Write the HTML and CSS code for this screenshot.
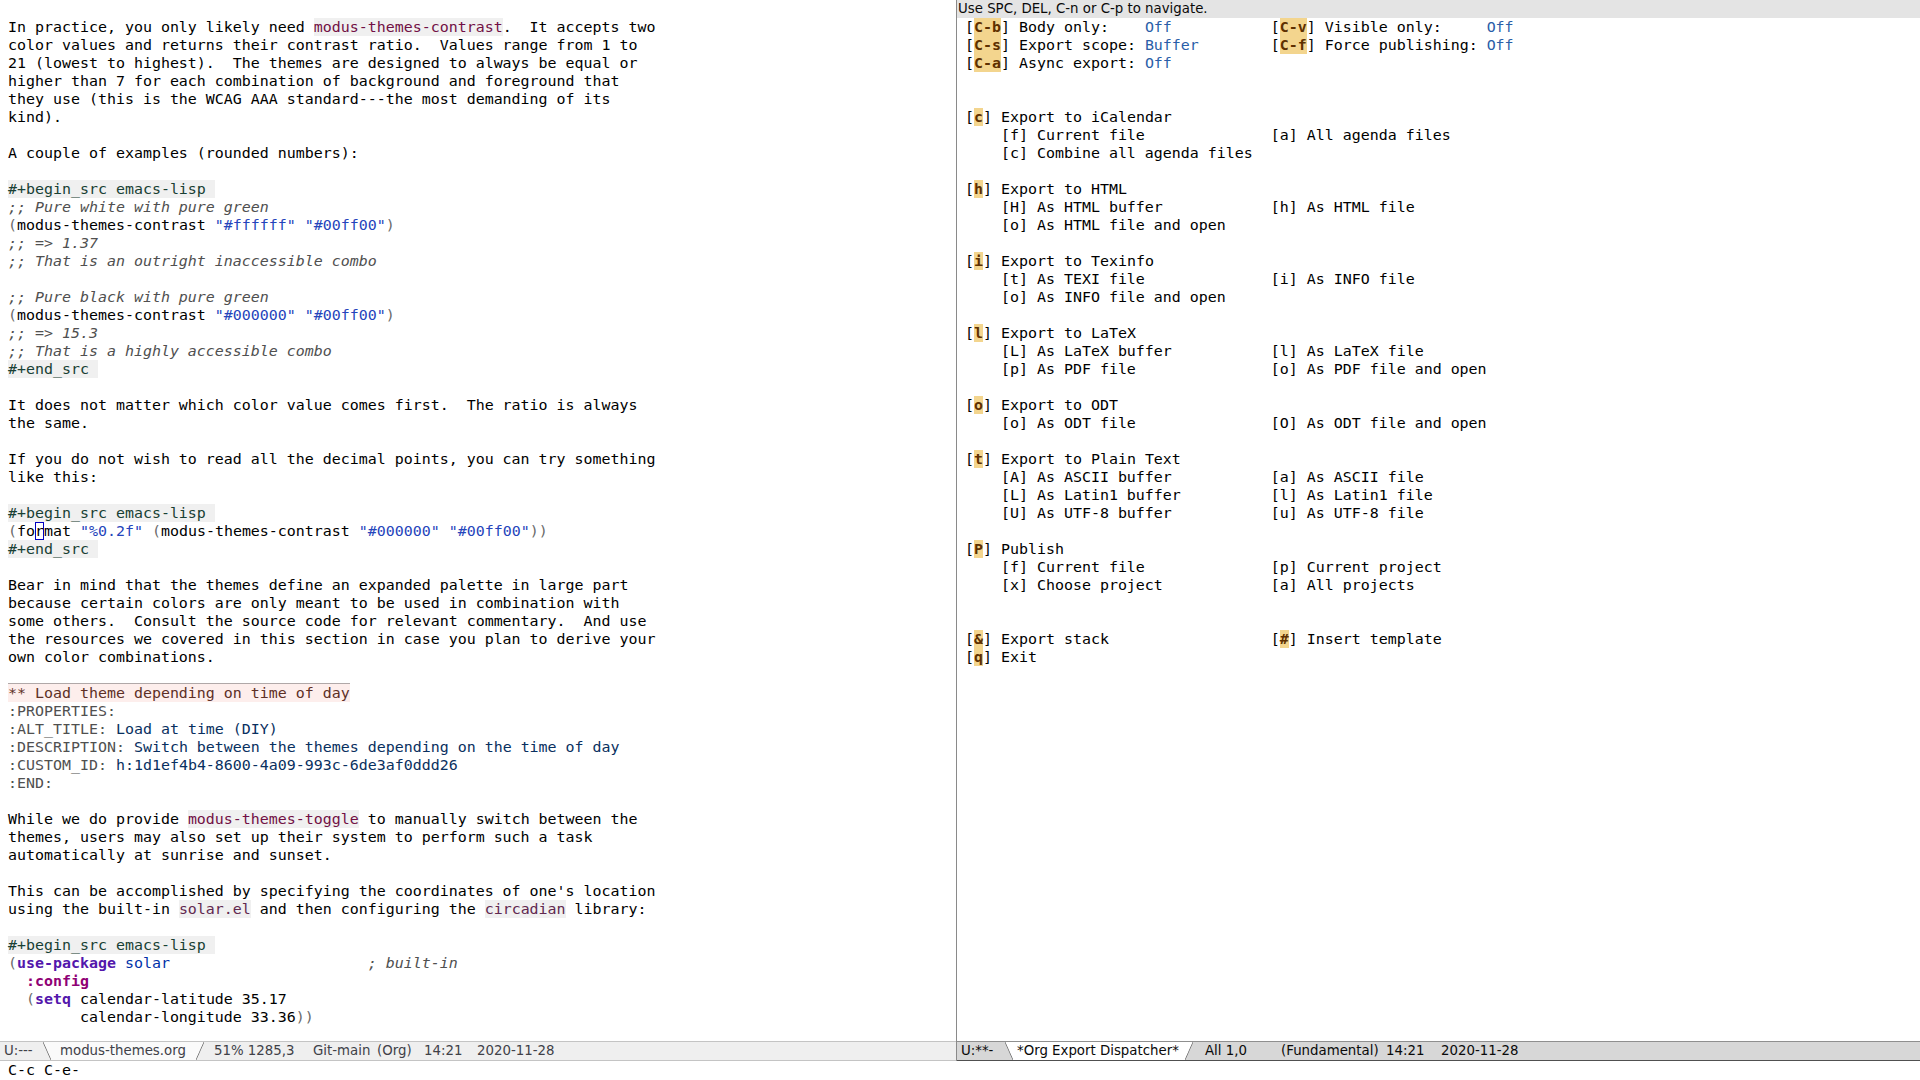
FILE: index.html
```html
<!DOCTYPE html>
<html>
<head>
<meta charset="utf-8">
<link rel="stylesheet" href="styles.css">
</head>
<body>
<div class="frame">
  <div class="windows">
    <section class="win win-left">
      <div class="buffer">
<div class="line"></div>
<div class="line">In practice, you only likely need <span class="c">modus-themes-contrast</span>.  It accepts two</div>
<div class="line">color values and returns their contrast ratio.  Values range from 1 to</div>
<div class="line">21 (lowest to highest).  The themes are designed to always be equal or</div>
<div class="line">higher than 7 for each combination of background and foreground that</div>
<div class="line">they use (this is the WCAG AAA standard---the most demanding of its</div>
<div class="line">kind).</div>
<div class="line"></div>
<div class="line">A couple of examples (rounded numbers):</div>
<div class="line"></div>
<div class="line"><span class="bl">#+begin_src emacs-lisp </span></div>
<div class="line"><span class="cm">;; Pure white with pure green</span></div>
<div class="line"><span class="p">(</span>modus-themes-contrast <span class="s">"#ffffff"</span> <span class="s">"#00ff00"</span><span class="p">)</span></div>
<div class="line"><span class="cm">;; =&gt; 1.37</span></div>
<div class="line"><span class="cm">;; That is an outright inaccessible combo</span></div>
<div class="line"></div>
<div class="line"><span class="cm">;; Pure black with pure green</span></div>
<div class="line"><span class="p">(</span>modus-themes-contrast <span class="s">"#000000"</span> <span class="s">"#00ff00"</span><span class="p">)</span></div>
<div class="line"><span class="cm">;; =&gt; 15.3</span></div>
<div class="line"><span class="cm">;; That is a highly accessible combo</span></div>
<div class="line"><span class="bl">#+end_src </span></div>
<div class="line"></div>
<div class="line">It does not matter which color value comes first.  The ratio is always</div>
<div class="line">the same.</div>
<div class="line"></div>
<div class="line">If you do not wish to read all the decimal points, you can try something</div>
<div class="line">like this:</div>
<div class="line"></div>
<div class="line"><span class="bl">#+begin_src emacs-lisp </span></div>
<div class="line"><span class="p">(</span>fo<span class="cur">r</span>mat <span class="s">"%0.2f"</span> <span class="p">(</span>modus-themes-contrast <span class="s">"#000000"</span> <span class="s">"#00ff00"</span><span class="p">))</span></div>
<div class="line"><span class="bl">#+end_src </span></div>
<div class="line"></div>
<div class="line">Bear in mind that the themes define an expanded palette in large part</div>
<div class="line">because certain colors are only meant to be used in combination with</div>
<div class="line">some others.  Consult the source code for relevant commentary.  And use</div>
<div class="line">the resources we covered in this section in case you plan to derive your</div>
<div class="line">own color combinations.</div>
<div class="line"></div>
<div class="line"><span class="h2">** Load theme depending on time of day</span></div>
<div class="line"><span class="pk">:PROPERTIES:</span></div>
<div class="line"><span class="pk">:ALT_TITLE:</span> <span class="pv">Load at time (DIY)</span></div>
<div class="line"><span class="pk">:DESCRIPTION:</span> <span class="pv">Switch between the themes depending on the time of day</span></div>
<div class="line"><span class="pk">:CUSTOM_ID:</span> <span class="pv">h:1d1ef4b4-8600-4a09-993c-6de3af0ddd26</span></div>
<div class="line"><span class="pk">:END:</span></div>
<div class="line"></div>
<div class="line">While we do provide <span class="c">modus-themes-toggle</span> to manually switch between the</div>
<div class="line">themes, users may also set up their system to perform such a task</div>
<div class="line">automatically at sunrise and sunset.</div>
<div class="line"></div>
<div class="line">This can be accomplished by specifying the coordinates of one's location</div>
<div class="line">using the built-in <span class="v">solar.el</span> and then configuring the <span class="v">circadian</span> library:</div>
<div class="line"></div>
<div class="line"><span class="bl">#+begin_src emacs-lisp </span></div>
<div class="line"><span class="p">(</span><span class="kw">use-package</span> <span class="cn">solar</span>                      <span class="cm">; built-in</span></div>
<div class="line">  <span class="bi">:config</span></div>
<div class="line">  <span class="p">(</span><span class="kw">setq</span> calendar-latitude 35.17</div>
<div class="line">        calendar-longitude 33.36<span class="p">))</span></div>
      </div>
      <div class="modeline inactive">
        <span class="ml-flag">U:---</span>
        <span class="tab tab-left">modus-themes.org</span>
        <span class="ml-pos-l">51% 1285,3</span>
        <span class="ml-git">Git-main</span>
        <span class="ml-mode-l">(Org)</span>
        <span class="ml-time-l">14:21</span>
        <span class="ml-date">2020-11-28</span>
      </div>
    </section>
    <div class="divider"></div>
    <section class="win win-right">
      <div class="headerline">Use SPC, DEL, C-n or C-p to navigate.</div>
      <div class="buffer dispatch">
<div class="drow"><span>[<b class="k">C-b</b>] Body only:    <span class="val">Off</span></span><span>[<b class="k">C-v</b>] Visible only:     <span class="val">Off</span></span></div>
<div class="drow"><span>[<b class="k">C-s</b>] Export scope: <span class="val">Buffer</span></span><span>[<b class="k">C-f</b>] Force publishing: <span class="val">Off</span></span></div>
<div class="drow"><span>[<b class="k">C-a</b>] Async export: <span class="val">Off</span></span><span></span></div>
<div class="line"></div>
<div class="line"></div>
<div class="drow"><span>[<b class="k">c</b>] Export to iCalendar</span><span></span></div>
<div class="drow"><span class="sub">[f] Current file</span><span>[a] All agenda files</span></div>
<div class="drow"><span class="sub">[c] Combine all agenda files</span><span></span></div>
<div class="line"></div>
<div class="drow"><span>[<b class="k">h</b>] Export to HTML</span><span></span></div>
<div class="drow"><span class="sub">[H] As HTML buffer</span><span>[h] As HTML file</span></div>
<div class="drow"><span class="sub">[o] As HTML file and open</span><span></span></div>
<div class="line"></div>
<div class="drow"><span>[<b class="k">i</b>] Export to Texinfo</span><span></span></div>
<div class="drow"><span class="sub">[t] As TEXI file</span><span>[i] As INFO file</span></div>
<div class="drow"><span class="sub">[o] As INFO file and open</span><span></span></div>
<div class="line"></div>
<div class="drow"><span>[<b class="k">l</b>] Export to LaTeX</span><span></span></div>
<div class="drow"><span class="sub">[L] As LaTeX buffer</span><span>[l] As LaTeX file</span></div>
<div class="drow"><span class="sub">[p] As PDF file</span><span>[o] As PDF file and open</span></div>
<div class="line"></div>
<div class="drow"><span>[<b class="k">o</b>] Export to ODT</span><span></span></div>
<div class="drow"><span class="sub">[o] As ODT file</span><span>[O] As ODT file and open</span></div>
<div class="line"></div>
<div class="drow"><span>[<b class="k">t</b>] Export to Plain Text</span><span></span></div>
<div class="drow"><span class="sub">[A] As ASCII buffer</span><span>[a] As ASCII file</span></div>
<div class="drow"><span class="sub">[L] As Latin1 buffer</span><span>[l] As Latin1 file</span></div>
<div class="drow"><span class="sub">[U] As UTF-8 buffer</span><span>[u] As UTF-8 file</span></div>
<div class="line"></div>
<div class="drow"><span>[<b class="k">P</b>] Publish</span><span></span></div>
<div class="drow"><span class="sub">[f] Current file</span><span>[p] Current project</span></div>
<div class="drow"><span class="sub">[x] Choose project</span><span>[a] All projects</span></div>
<div class="line"></div>
<div class="line"></div>
<div class="drow"><span>[<b class="k">&amp;</b>] Export stack</span><span>[<b class="k">#</b>] Insert template</span></div>
<div class="drow"><span>[<b class="k">q</b>] Exit</span><span></span></div>
      </div>
      <div class="modeline active">
        <span class="ml-flag-r">U:**-</span>
        <span class="tab tab-right">*Org Export Dispatcher*</span>
        <span class="ml-pos-r">All 1,0</span>
        <span class="ml-mode-r">(Fundamental)</span>
        <span class="ml-time-r">14:21</span>
        <span class="ml-date">2020-11-28</span>
      </div>
    </section>
  </div>
  <div class="echo">C-c C-e-</div>
</div>
</body>
</html>
```

FILE: styles.css
```css
html, body {
  margin: 0;
  padding: 0;
  background: #ffffff;
}

body {
  font-family: "DejaVu Sans Mono", "Liberation Mono", monospace;
  font-size: 14.95px;
  line-height: 18px;
  color: #000000;
}

.frame {
  width: 1920px;
  height: 1080px;
  display: flex;
  flex-direction: column;
  overflow: hidden;
}

.windows {
  display: flex;
  height: 1061px;
}

.win {
  display: flex;
  flex-direction: column;
  min-width: 0;
}

.win-left { width: 956px; }
.win-right { width: 963px; }

.divider {
  width: 1px;
  background: #8a8a8a;
}

.buffer {
  flex: 1;
  padding-left: 8px;
  overflow: hidden;
}

.line {
  height: 18px;
  white-space: pre;
}

/* org / lisp faces */
.c { color: #721045; background: #f0f0f0; }
.v { color: #61284f; background: #f0f0f0; }
.bl { color: #184034; background: #f0f0f0; }
.cm { color: #505050; font-style: italic; }
.s { color: #2544bb; }
.p { color: #6a6a6a; }
.kw { color: #5317ac; font-weight: bold; }
.bi { color: #8f0075; font-weight: bold; }
.cn { color: #0031a9; }
.h2 {
  color: #5d3026;
  background: #fdeeec;
  border-top: 1px solid #b0a8a8;
}
.pk { color: #505050; }
.pv { color: #093060; }
.cur {
  display: inline-block;
  height: 18px;
  vertical-align: top;
  box-shadow: inset 0 0 0 1px #0000c0;
}

/* header line */
.headerline {
  height: 18px;
  background: #e4e4e4;
  font-family: "DejaVu Sans", sans-serif;
  font-size: 13.33px;
  line-height: 17px;
  padding-left: 1px;
  white-space: pre;
  color: #0a0a0a;
}

/* dispatcher */
.drow {
  display: grid;
  grid-template-columns: 34ch 1fr;
  height: 18px;
  white-space: pre;
}
.sub { padding-left: 4ch; }
.k {
  color: #5e3000;
  background: #f3d58e;
  font-weight: bold;
}
.val { color: #2a5ea8; }

/* mode line */
.modeline {
  height: 20px;
  box-sizing: border-box;
  display: flex;
  align-items: stretch;
  font-family: "DejaVu Sans", sans-serif;
  font-size: 13.33px;
  line-height: 18px;
  white-space: pre;
}
.modeline > span { flex: none; }

.modeline.inactive {
  background: #efefef;
  color: #404148;
  border-top: 1px solid #c4c4c4;
  border-bottom: 1px solid #c4c4c4;
}
.modeline.active {
  background: #d7d7d7;
  color: #0a0a0a;
  border-top: 1px solid #8f8f8f;
  border-bottom: 1px solid #505050;
}

.tab {
  position: relative;
  z-index: 0;
  box-sizing: border-box;
}
.tab::before {
  content: "";
  position: absolute;
  inset: 0;
  z-index: -1;
  background: #ffffff;
  clip-path: polygon(0 0, 100% 0, calc(100% - 8px) 100%, 8px 100%);
}
.tab::after {
  content: "";
  position: absolute;
  inset: 0;
  background:
    linear-gradient(to top right, transparent calc(50% - 0.8px), #7a7a7a 50%, transparent calc(50% + 0.8px)) left top / 8px 100% no-repeat,
    linear-gradient(to top left, transparent calc(50% - 0.8px), #7a7a7a 50%, transparent calc(50% + 0.8px)) right top / 8px 100% no-repeat;
}
.inactive .tab::before { background: #fafafa; }

.ml-flag { margin-left: 4px; width: 39px; }
.tab-left { width: 161px; padding-left: 17px; }
.ml-pos-l { margin-left: 10px; width: 99px; }
.ml-git { width: 64px; }
.ml-mode-l { width: 47px; }
.ml-time-l { width: 53px; }

.ml-flag-r { margin-left: 4px; width: 44px; }
.tab-right { width: 188px; padding-left: 12px; }
.ml-pos-r { margin-left: 12px; width: 76px; }
.ml-mode-r { width: 105px; }
.ml-time-r { width: 55px; }

.echo {
  height: 19px;
  padding-left: 8px;
  white-space: pre;
  line-height: 18px;
}
```
